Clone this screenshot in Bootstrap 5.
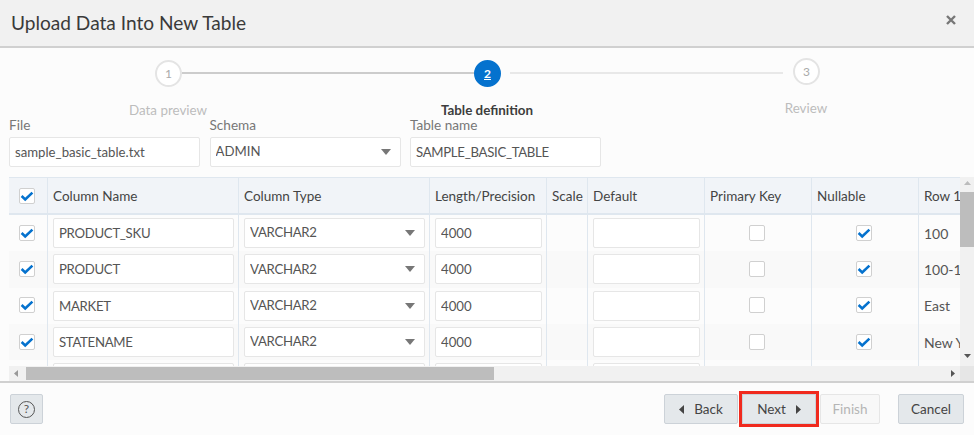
<!DOCTYPE html>
<html lang="en">
<head>
<meta charset="utf-8">
<title>Upload Data Into New Table</title>
<link rel="stylesheet" href="https://cdn.jsdelivr.net/npm/bootstrap@5.3.0/dist/css/bootstrap.min.css">
<style>
html,body{height:435px;overflow:hidden}
body{background:#fcfcfc;font-family:"Lato","Open Sans",sans-serif;font-size:14px;color:#555}
.dlg-head{height:48px;background:#f1f1f1;border-bottom:2px solid #d0d0d0;padding:0 18px 0 11px}
.dlg-title{font-size:19.1px;font-weight:400;color:#3a3a3a;margin:0;line-height:1}
.dlg-x{background:none;border:0;padding:0;line-height:0;margin-bottom:7px}
.stepper{padding:12px 0 0 155px;height:52px}
.step-dot{width:27px;height:27px;border-radius:50%;border:2px solid #e4e4e4;background:#fff;color:#aaa;font-size:12px;flex:none}
.step-dot.on{background:#0572ce;border-color:#0572ce;color:#fff;font-weight:700;text-decoration:underline}
.step-dot.up{margin:-2px 0 0 10px}
.step-line{height:2px;width:292px;margin-top:12px;background:#ccc;flex:none}
.step-line.off{background:#e8e8e8;margin-left:9px;width:273px}
.step-labels{display:grid;grid-template-columns:repeat(3,319px);padding-left:8.5px;margin-top:2px;height:16px;line-height:16px;font-size:13.4px;color:#bdbdbd;text-align:center}
.step-labels b{color:#3d3d3d;font-weight:700}
.step-labels .up{margin-top:-2px}
.fields{display:grid;grid-template-columns:repeat(3,191px);column-gap:9.5px;padding-left:9px;margin-bottom:10px}
.fields label{display:block;font-size:13.6px;line-height:14px;color:#777;margin-bottom:5px}
.form-control.fld,.form-select.fld{height:30px;border:1px solid #e6e6e6;border-radius:2px;padding:0 5px;font-size:13.2px;color:#555;background-color:#fff;box-shadow:none}
.form-control.caps,.form-select.caps{letter-spacing:-.3px}
.form-select.fld{background-image:url("data:image/svg+xml,%3Csvg xmlns='http://www.w3.org/2000/svg' width='10' height='6'%3E%3Cpath d='M0 0h10L5 6z' fill='%23777'/%3E%3C/svg%3E");background-size:10px 6px;background-position:right 9px center;background-repeat:no-repeat}
.grid-wrap{margin-left:9px;height:204px}
.grid-main{width:951px;flex:none}
.grid-view{height:189px;overflow:hidden}
.grid-tbl{table-layout:fixed;width:951px;border-collapse:separate;border-spacing:0;margin:0}
.grid-tbl th,.grid-tbl td{padding:0 4.5px 0 5px;vertical-align:middle;border:0;border-right:1px solid #dfe7ef;white-space:nowrap;overflow:hidden;background:transparent;color:#555;font-size:14px}
.grid-tbl thead th{height:38px;padding-top:1px;background:#f1f4f8;font-weight:400;font-size:13.5px;color:#444;border-top:1px solid #dfe7ef;border-bottom:2px solid #dfe7ef}
.grid-tbl tbody td{height:36.33px}
.grid-tbl tbody tr:nth-child(even) td{background:#f9f9f9}
.grid-tbl th.mid,.grid-tbl td.mid{text-align:center;padding-right:7px}
.grid-tbl .last{border-right:0}
.tick.form-check-input{width:16px;height:16px;margin:2px 0 0;border:1px solid #d0d0d0;border-radius:2px;background-color:#fff;box-shadow:none;float:none;opacity:1}
.tick.form-check-input:checked{background-color:#fff;border-color:#d0d0d0;background-image:url("data:image/svg+xml,%3Csvg xmlns='http://www.w3.org/2000/svg' viewBox='0 0 16 16'%3E%3Cpath d='M2.6 8l3.6 3.4L13.4 4.6' fill='none' stroke='%230572ce' stroke-width='2.6'/%3E%3C/svg%3E");background-size:16px 16px}
.sb-v{width:14px;background:#f1f1f1}
.sb-thumb-v{height:55px;background:#bdbdbd;margin-top:7px}
.sb-h{height:15px;background:#f1f1f1;padding:0 5px}
.sb-thumb-h{width:468px;height:13px;background:#bdbdbd;margin-left:8px}
.sb-corner{height:15px;background:#e6e6e6}
.sb-arrow{flex:none;line-height:0}
.sb-side{width:14px}
.dlg-foot{height:53px;border-top:2px solid #d0d0d0;padding:11px 10px 0}
.act.btn{height:30px;border:1px solid #ccd2d8;border-radius:2px;background:#e4e8eb;color:#444;font-size:13.5px;padding:0 10px;box-shadow:none}
.act.act-off{background:#f8f8f8;border-color:#e6e6e6;color:#b5b5b5;opacity:1}
.act-help{width:33px}
.act-back{width:74px}
.act.act-next{width:74px;border-radius:0;outline:3px solid #f02a1e;outline-offset:0}
.act-fin{width:60px}
.act-can{width:66px;margin-left:14px}
.act-gap{gap:10px}
.help-ring{width:17px;height:17px;border:1.3px solid #555;border-radius:50%;font-size:12px;line-height:1;color:#555}
</style>
</head>
<body>
<div class="dlg-head d-flex align-items-center justify-content-between">
  <h1 class="dlg-title">Upload Data Into New Table</h1>
  <button class="dlg-x" type="button" aria-label="Close"><svg width="10" height="10" viewBox="0 0 10 10"><path d="M1 1l8 8M9 1l-8 8" stroke="#777" stroke-width="2.4"/></svg></button>
</div>

<div class="stepper d-flex align-items-start">
  <span class="step-dot d-flex align-items-center justify-content-center">1</span>
  <span class="step-line"></span>
  <span class="step-dot on d-flex align-items-center justify-content-center">2</span>
  <span class="step-line off"></span>
  <span class="step-dot up d-flex align-items-center justify-content-center">3</span>
</div>
<div class="step-labels"><span>Data preview</span><b>Table definition</b><span class="up">Review</span></div>

<div class="fields">
  <div><label>File</label><input class="form-control fld" value="sample_basic_table.txt"></div>
  <div><label>Schema</label><select class="form-select fld"><option>ADMIN</option></select></div>
  <div><label>Table name</label><input class="form-control fld caps" value="SAMPLE_BASIC_TABLE"></div>
</div>

<div class="grid-wrap d-flex">
  <div class="grid-main">
    <div class="grid-view">
      <table class="table grid-tbl">
        <colgroup><col style="width:39px"><col style="width:191px"><col style="width:191px"><col style="width:117px"><col style="width:41px"><col style="width:117px"><col style="width:107px"><col style="width:107px"><col style="width:41px"></colgroup>
        <thead><tr>
          <th class="mid"><input class="form-check-input tick" type="checkbox" checked></th>
          <th>Column Name</th><th>Column Type</th><th>Length/Precision</th><th>Scale</th><th>Default</th><th>Primary Key</th><th>Nullable</th><th class="last">Row 1</th>
        </tr></thead>
        <tbody>
          <tr><td class="mid"><input class="form-check-input tick" type="checkbox" checked></td><td><input class="form-control fld caps" value="PRODUCT_SKU"></td><td><select class="form-select fld caps"><option>VARCHAR2</option></select></td><td><input class="form-control fld" value="4000"></td><td></td><td><input class="form-control fld"></td><td class="mid"><input class="form-check-input tick" type="checkbox"></td><td class="mid"><input class="form-check-input tick" type="checkbox" checked></td><td class="last">100</td></tr>
          <tr><td class="mid"><input class="form-check-input tick" type="checkbox" checked></td><td><input class="form-control fld caps" value="PRODUCT"></td><td><select class="form-select fld caps"><option>VARCHAR2</option></select></td><td><input class="form-control fld" value="4000"></td><td></td><td><input class="form-control fld"></td><td class="mid"><input class="form-check-input tick" type="checkbox"></td><td class="mid"><input class="form-check-input tick" type="checkbox" checked></td><td class="last">100-10</td></tr>
          <tr><td class="mid"><input class="form-check-input tick" type="checkbox" checked></td><td><input class="form-control fld caps" value="MARKET"></td><td><select class="form-select fld caps"><option>VARCHAR2</option></select></td><td><input class="form-control fld" value="4000"></td><td></td><td><input class="form-control fld"></td><td class="mid"><input class="form-check-input tick" type="checkbox"></td><td class="mid"><input class="form-check-input tick" type="checkbox" checked></td><td class="last">East</td></tr>
          <tr><td class="mid"><input class="form-check-input tick" type="checkbox" checked></td><td><input class="form-control fld caps" value="STATENAME"></td><td><select class="form-select fld caps"><option>VARCHAR2</option></select></td><td><input class="form-control fld" value="4000"></td><td></td><td><input class="form-control fld"></td><td class="mid"><input class="form-check-input tick" type="checkbox"></td><td class="mid"><input class="form-check-input tick" type="checkbox" checked></td><td class="last">New York</td></tr>
          <tr><td class="mid"></td><td><input class="form-control fld"></td><td><select class="form-select fld"><option></option></select></td><td><input class="form-control fld"></td><td></td><td><input class="form-control fld"></td><td class="mid"></td><td class="mid"></td><td class="last"></td></tr>
        </tbody>
      </table>
    </div>
    <div class="sb-h d-flex align-items-center">
      <svg class="sb-arrow" width="4" height="7" viewBox="0 0 4 7"><path d="M4 0v7L0 3.5z" fill="#999"/></svg>
      <div class="sb-thumb-h"></div>
      <svg class="sb-arrow ms-auto" width="4" height="7" viewBox="0 0 4 7"><path d="M0 0v7l4-3.5z" fill="#555"/></svg>
    </div>
  </div>
  <div class="sb-side d-flex flex-column">
    <div class="sb-v flex-grow-1 d-flex flex-column align-items-center pt-1">
      <svg class="sb-arrow" width="7" height="4" viewBox="0 0 7 4"><path d="M0 4h7L3.5 0z" fill="#bbb"/></svg>
      <div class="sb-thumb-v w-100"></div>
      <svg class="sb-arrow mt-auto mb-2" width="7" height="4" viewBox="0 0 7 4"><path d="M0 0h7L3.5 4z" fill="#555"/></svg>
    </div>
    <div class="sb-corner"></div>
  </div>
</div>

<div class="dlg-foot d-flex align-items-start">
  <button class="btn act act-help d-flex align-items-center justify-content-center p-0" type="button"><span class="help-ring d-flex align-items-center justify-content-center">?</span></button>
  <div class="ms-auto d-flex gap-1">
    <button class="btn act act-back d-flex align-items-center justify-content-center act-gap" type="button"><svg width="5" height="9" viewBox="0 0 5 9"><path d="M5 0v9L0 4.5z" fill="#444"/></svg>Back</button>
    <button class="btn act act-next d-flex align-items-center justify-content-center act-gap" type="button">Next<svg width="5" height="9" viewBox="0 0 5 9"><path d="M0 0v9l5-4.5z" fill="#444"/></svg></button>
    <button class="btn act act-off act-fin" type="button" disabled>Finish</button>
    <button class="btn act act-can" type="button">Cancel</button>
  </div>
</div>
</body>
</html>
